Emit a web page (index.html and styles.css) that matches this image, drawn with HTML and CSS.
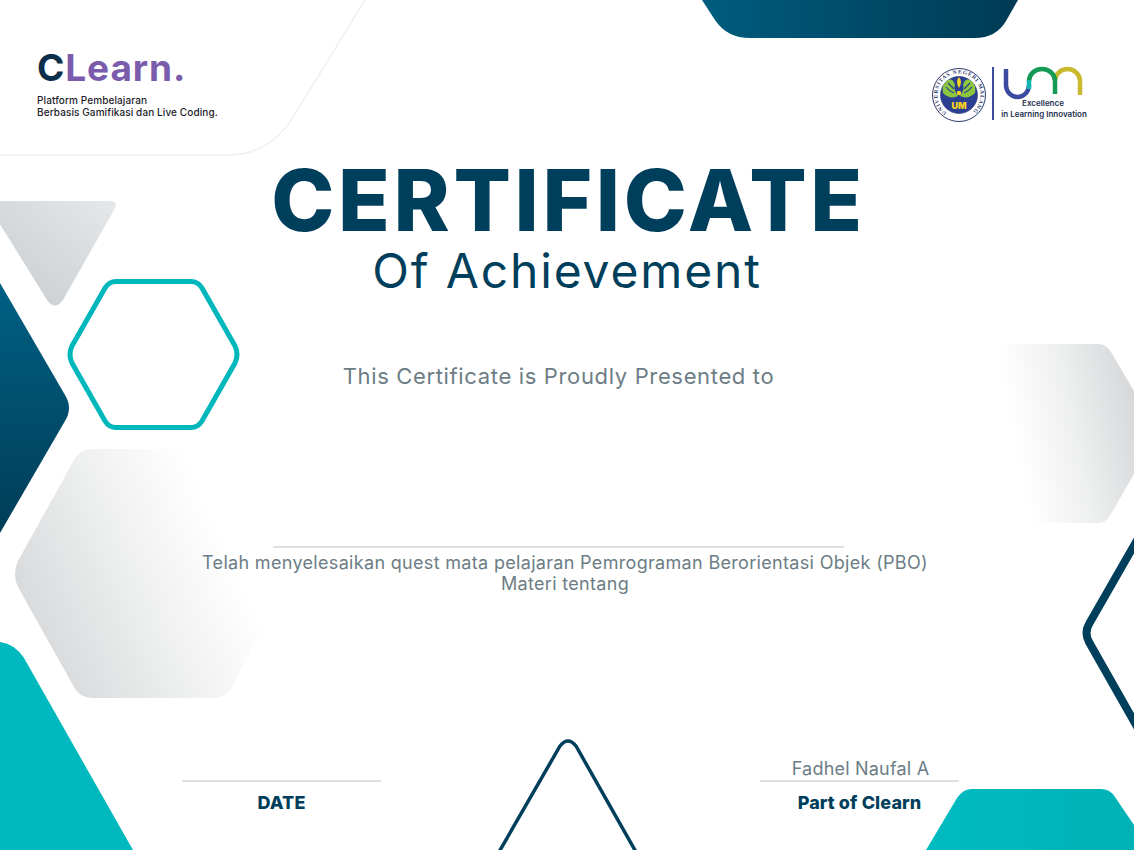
FILE: index.html
```html
<!DOCTYPE html>
<html lang="id">
<head>
<meta charset="utf-8">
<title>Certificate of Achievement</title>
<link rel="stylesheet" href="styles.css">
</head>
<body>
<main class="certificate">
  <svg class="backdrop" width="1134" height="850" viewBox="0 0 1134 850" aria-hidden="true">
    <defs>
      <linearGradient id="navyH" x1="0" y1="0" x2="1" y2="0"><stop offset="0" stop-color="#005c7e"/><stop offset="1" stop-color="#003a55"/></linearGradient>
      <linearGradient id="navyV" x1="0" y1="0" x2="0" y2="1"><stop offset="0" stop-color="#006083"/><stop offset="1" stop-color="#003d58"/></linearGradient>
      <linearGradient id="greyTri" x1="0" y1="1" x2="1" y2="0"><stop offset="0" stop-color="#c6cbcf"/><stop offset="1" stop-color="#e6e8ea"/></linearGradient>
      <linearGradient id="greyBig" gradientUnits="userSpaceOnUse" x1="30" y1="640" x2="228" y2="550"><stop offset="0" stop-color="#d6d8da"/><stop offset="0.55" stop-color="#eeefef"/><stop offset="1" stop-color="#ffffff"/></linearGradient>
      <linearGradient id="greyRight" gradientUnits="userSpaceOnUse" x1="1134" y1="400" x2="985" y2="430"><stop offset="0" stop-color="#d6d8da"/><stop offset="0.42" stop-color="#eeefef"/><stop offset="0.82" stop-color="#ffffff"/></linearGradient>
      <linearGradient id="tealH" x1="0" y1="0" x2="1" y2="0"><stop offset="0" stop-color="#00bbc0"/><stop offset="1" stop-color="#00b2b6"/></linearGradient>
    </defs>
    <path class="outline-pale" d="M0 155H232Q268 153 290 122L365 0"/>
    <path fill="url(#navyH)" d="M702 0L715 20Q727 38 750 38H975Q996 38 1006 21L1018 0Z"/>
    <path fill="url(#greyTri)" d="M-10 201H110Q119 201 114 210L63 300Q55 311 47 300L-10 208Z"/>
    <path fill="url(#navyV)" d="M0 283L65 395Q73 408 65 421L0 533Z"/>
    <path class="outline-teal" d="M116 281.500H191Q198 281.500 202 288L235 346Q239 354.500 235 363L202 421Q198 427.500 191 427.500H116Q109 427.500 105 421L72 363Q68 354.500 72 346L105 288Q109 281.500 116 281.500Z"/>
    <path fill="url(#greyBig)" d="M92 449H190L290 574L232 687Q226 698 214 698H92Q80 698 74 687L18 587Q12 574 18 561L74 460Q80 449 92 449Z"/>
    <path fill="url(#greyRight)" d="M990 344H1098Q1106 344 1111 352L1134 391V474L1111 514Q1106 523 1098 523H990Z"/>
    <path fill="#00b9be" d="M0 642Q15 644 24 658L133 850H0Z"/>
    <path fill="url(#tealH)" d="M926 850L957 798Q963 789 972 789H1101Q1110 789 1115 797L1134 825V850Z"/>
    <path class="outline-navy-thin" d="M499 852L560 746Q568 736 576 746L636 852"/>
    <path class="outline-navy-thick" d="M1140 535L1089 624Q1084 633 1089 642L1140 732"/>
  </svg>

  <header class="top">
    <div class="brand">
      <div class="brand-name"><span class="brand-c">C</span>Learn.</div>
      <p class="brand-tag">Platform Pembelajaran<br>Berbasis Gamifikasi dan Live Coding.</p>
    </div>
    <svg class="um-logo" width="160" height="60" viewBox="0 0 160 60" role="img" aria-label="Universitas Negeri Malang">
      <defs>
        <path id="sealRing" d="M18.700 50.600A21.500 21.500 0 1 1 43.300 50.600"/>
      </defs>
      <circle cx="31" cy="33" r="26.500" fill="#fff" stroke="#2e3a6e" stroke-width="1"/>
      <text class="seal-text"><textPath href="#sealRing" textLength="106">UNIVERSITAS NEGERI MALANG</textPath></text>
      <circle cx="31" cy="33" r="18.500" fill="#2b3f93" stroke="#1d2a66" stroke-width="0.6"/>
      <path fill="#8cc63f" d="M30 34Q22 38 15 31Q13 23 20 18Q25 16 27 23Q25 27 30 34Z"/>
      <path fill="#8cc63f" d="M32 34Q40 38 47 31Q49 23 42 18Q37 16 35 23Q37 27 32 34Z"/>
      <path class="seal-vein" d="M18 25Q21 29 26 31M20 21Q23 24 26 27M44 25Q41 29 36 31M42 21Q39 24 36 27"/>
      <path fill="#f6d21c" d="M31 15Q35 20 31 26Q27 20 31 15Z"/>
      <circle cx="31" cy="31" r="2.200" fill="#f6d21c"/>
      <text class="seal-um" x="31" y="46.500" text-anchor="middle">UM</text>
      <rect x="64" y="5" width="2" height="53" fill="#3c4c9c"/>
      <path class="um-stroke um-blue" d="M78 7V23A11.500 12 0 0 0 101 23"/>
      <path class="um-stroke um-yellow" d="M127 19A12.500 12 0 0 1 152 19V33"/>
      <path class="um-stroke um-green" d="M101 19A13 12 0 0 1 127 19V32"/>
      <path class="um-stroke um-teal" d="M101 27V18"/>
      <text class="um-text" x="115" y="44" text-anchor="middle">Excellence</text>
      <text class="um-text" x="116" y="55" text-anchor="middle">in Learning Innovation</text>
    </svg>
  </header>

  <section class="headline">
    <h1 class="title">CERTIFICATE</h1>
    <p class="subtitle">Of Achievement</p>
    <p class="presented">This Certificate is Proudly Presented to</p>
  </section>

  <section class="details">
    <hr class="rule rule-wide">
    <p class="details-text">Telah menyelesaikan quest mata pelajaran Pemrograman Berorientasi Objek (PBO)<br>Materi tentang</p>
  </section>

  <footer class="signatures">
    <div class="signature">
      <div class="signature-name"></div>
      <hr class="rule">
      <div class="signature-label">DATE</div>
    </div>
    <div class="signature">
      <div class="signature-name">Fadhel Naufal A</div>
      <hr class="rule">
      <div class="signature-label">Part of Clearn</div>
    </div>
  </footer>
</main>
</body>
</html>
```

FILE: styles.css
```css
* { box-sizing: border-box; }

html, body {
  margin: 0;
  background: #fff;
}

.certificate {
  position: relative;
  width: 1134px;
  height: 850px;
  overflow: hidden;
  display: flex;
  flex-direction: column;
  font-family: Inter, "Noto Sans", "Liberation Sans", sans-serif;
  color: #003f5c;
}

.backdrop {
  position: absolute;
  inset: 0;
}

.outline-pale { fill: none; stroke: #f0f1f1; stroke-width: 1.500; }
.outline-teal { fill: none; stroke: #00b7bb; stroke-width: 5; }
.outline-navy-thin { fill: none; stroke: #003f5c; stroke-width: 3.500; }
.outline-navy-thick { fill: none; stroke: #003f5c; stroke-width: 8; }

.top {
  position: relative;
  height: 156px;
  display: flex;
  justify-content: space-between;
  align-items: flex-start;
  padding: 48px 46px 0 37px;
}

.brand-name {
  font-size: 37px;
  line-height: 40px;
  font-weight: 700;
  letter-spacing: 0.900px;
  color: #7a5bac;
}

.brand-c { color: #0b2e4a; }

.brand-tag {
  margin: 6px 0 0;
  font-size: 10px;
  line-height: 12px;
  font-weight: 500;
  letter-spacing: 0.100px;
  color: #1d1d2b;
}

.um-logo { margin-top: 14px; display: block; }

.seal-text { font: 700 5.500px "Liberation Serif", serif; fill: #2e3a6e; }
.seal-vein { fill: none; stroke: #2b3f93; stroke-width: 1.200; }
.seal-um { font: 900 9px Inter, sans-serif; fill: #f6d21c; }
.um-stroke { fill: none; stroke-width: 4.500; }
.um-blue { stroke: #3a4a9f; }
.um-teal { stroke: #12b5b0; }
.um-green { stroke: #159a55; }
.um-yellow { stroke: #c9b92e; }
.um-text { font: 600 8px Inter, sans-serif; fill: #23304f; }

.headline {
  position: relative;
  text-align: center;
}

.title {
  margin: 0;
  padding-left: 3px;
  font-size: 85px;
  line-height: 90px;
  font-weight: 800;
  letter-spacing: 3.600px;
}

.subtitle {
  margin: 0;
  font-size: 48px;
  line-height: 50px;
  font-weight: 400;
  letter-spacing: 1.850px;
}

.presented {
  margin: 65px 0 0;
  padding-right: 17px;
  font-size: 22px;
  line-height: 30px;
  letter-spacing: 0.650px;
  color: #6c7d85;
}

.details {
  position: relative;
  margin-top: 155px;
  text-align: center;
}

.rule {
  height: 2px;
  margin: 0;
  border: 0;
  background: #dfe0e1;
}

.rule-wide {
  width: 571px;
  margin: 0 0 0 273px;
}

.details-text {
  margin: 4px 0 0;
  padding-right: 4px;
  font-size: 18px;
  line-height: 21px;
  letter-spacing: 0.320px;
  color: #6c7d85;
}

.signatures {
  position: relative;
  margin-top: auto;
  display: flex;
  justify-content: space-between;
  padding: 0 175px 36px 182px;
}

.signature {
  width: 199px;
  text-align: center;
}

.signature-name {
  height: 22px;
  font-size: 18px;
  line-height: 22px;
  letter-spacing: 0.200px;
  padding-left: 2px;
  color: #6c7d85;
}

.signature-label {
  margin-top: 10px;
  font-size: 18px;
  line-height: 22px;
  font-weight: 800;
  letter-spacing: 0.100px;
}
```
